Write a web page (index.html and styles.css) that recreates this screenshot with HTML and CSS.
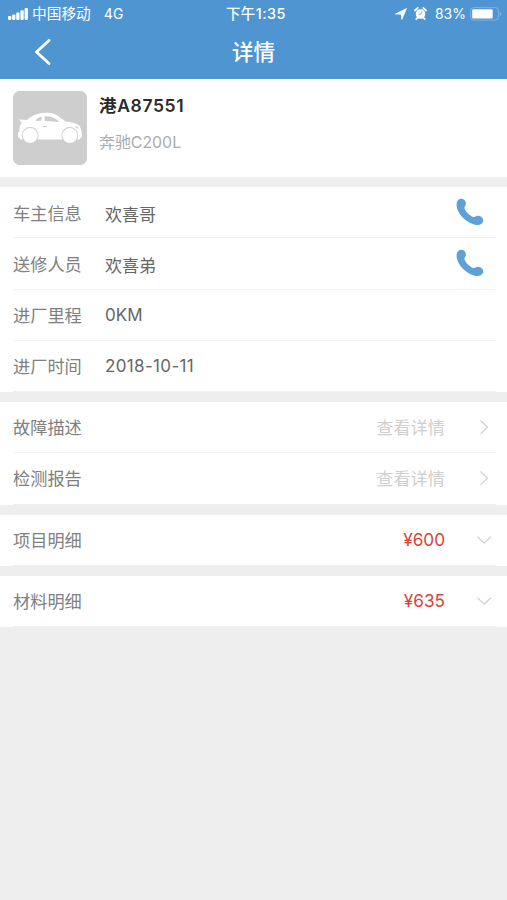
FILE: index.html
```html
<!DOCTYPE html>
<html lang="zh-CN">
<head>
<meta charset="utf-8">
<title>详情</title>
<link rel="stylesheet" href="styles.css">
</head>
<body>
<header class="header">
  <div class="status">
    <div class="status-left">
      <svg width="20" height="12" viewBox="0 0 20 12" fill="#fff"><rect x="0" y="8" width="3.3" height="4" rx="1"/><rect x="4.1" y="6.5" width="3.3" height="5.5" rx="1"/><rect x="8.2" y="4.5" width="3.3" height="7.5" rx="1"/><rect x="12.4" y="2.3" width="3.3" height="9.7" rx="1"/><rect x="16.6" y="0" width="3.3" height="12" rx="1"/></svg>
      <span class="carrier">中国移动</span><span class="network">4G</span>
    </div>
    <span class="clock">下午1:35</span>
    <div class="status-right">
      <svg class="locate" width="12" height="12" viewBox="0 0 12 12" fill="#fff" stroke="#fff" stroke-width=".8" stroke-linejoin="round"><path d="M11.5.5 6.8 11.4 6.4 6.2.5 6z"/></svg>
      <svg class="alarm" width="13" height="13" viewBox="0 0 13 13"><circle cx="6.5" cy="7" r="4.8" fill="#fff"/><path d="M.9 3.5 3.8 1M12.1 3.5 9.2 1M3.4 10.8 2.2 12.1M9.6 10.8l1.2 1.3" stroke="#fff" stroke-width="1.7" stroke-linecap="round"/><path d="M8.2 4.5 6.6 7.3H4.6" fill="none" stroke="#4e95d1" stroke-width=".8"/></svg>
      <span class="percent">83%</span>
      <svg class="battery" width="32" height="14" viewBox="0 0 32 14"><rect x=".6" y=".6" width="27.8" height="12.5" rx="3" fill="none" stroke="#86b7e0" stroke-width=".9"/><rect x="2.2" y="2.2" width="20.5" height="9.3" rx="1.2" fill="#fff"/><path d="M30 4.5q1.7 2.4 0 4.8z" fill="#a9cdea"/></svg>
    </div>
  </div>
  <nav class="nav">
    <svg class="back" width="18" height="28" viewBox="0 0 18 28"><path d="M15 2.5 2.5 14 15 25.5" fill="none" stroke="#fff" stroke-width="2.9" stroke-linecap="round" stroke-linejoin="round"/></svg>
    <h1 class="title">详情</h1>
  </nav>
</header>
<main>
  <section class="vehicle">
    <svg class="photo" width="74" height="74" viewBox="0 0 74 74"><rect width="74" height="74" rx="6.5" fill="#cecece"/><path d="M6 28.5 13.7 29C18 25.5 22 23.2 27 22.3 33 21.4 38 21.6 42 23.3 46 25.2 49 28 52.5 30.5 58 31 63 31.9 65.8 34.2 68 36.5 68.8 40 69 45.5L66.5 48.5H7.5L5 45.5V42L6.3 40.5 6.8 34.5 8.8 32z" fill="#fff"/><path d="M22.5 30C24 27.8 26 26.2 28.8 25.6L28.4 29.7zM31.4 25.3C37.5 24.8 42.5 26.8 46.5 31L31.9 30z" fill="#cecece"/><path d="M30 35.5h4" stroke="#cecece" stroke-width="1.2"/><path d="M61.5 35q3.2 0 5 2.6l-3.5-.8z" fill="#cecece"/><circle cx="17.2" cy="44.5" r="8.4" fill="#cecece"/><circle cx="56.8" cy="44.5" r="8.4" fill="#cecece"/><circle cx="17.2" cy="44.5" r="7.5" fill="#fff"/><circle cx="56.8" cy="44.5" r="7.5" fill="#fff"/></svg>
    <div class="vehicle-text">
      <div class="plate">港A87551</div>
      <div class="model">奔驰C200L</div>
    </div>
  </section>
  <section class="card owner">
    <div class="row"><span class="label contact">车主信息</span><span class="value person">欢喜哥</span><svg class="phone" width="28" height="28" viewBox="0 0 28 28"><path d="M4.8.7C7.8.2 9.9 2.5 9.9 5.5 9.9 7.8 8.2 8.4 8.4 10 8.9 13 14 18 17.2 19 18.7 19.3 19.8 17.8 21.8 17.7 24.8 17.7 27.4 20 27.3 22.7 26.9 25.7 23.2 27.4 20 26.9 10.2 25.2.3 15.3.6 6.1.7 3 2.2 1.1 4.8.7Z"/></svg></div>
    <div class="row"><span class="label contact">送修人员</span><span class="value person">欢喜弟</span><svg class="phone" width="28" height="28" viewBox="0 0 28 28"><path d="M4.8.7C7.8.2 9.9 2.5 9.9 5.5 9.9 7.8 8.2 8.4 8.4 10 8.9 13 14 18 17.2 19 18.7 19.3 19.8 17.8 21.8 17.7 24.8 17.7 27.4 20 27.3 22.7 26.9 25.7 23.2 27.4 20 26.9 10.2 25.2.3 15.3.6 6.1.7 3 2.2 1.1 4.8.7Z"/></svg></div>
    <div class="row"><span class="label">进厂里程</span><span class="value">0KM</span></div>
    <div class="row"><span class="label">进厂时间</span><span class="value date">2018-10-11</span></div>
  </section>
  <section class="card reports">
    <div class="row"><span class="label">故障描述</span><span class="more">查看详情</span><svg class="arrow" width="16" height="16" viewBox="0 0 16 16"><path d="m4.5 1.5 7 6.7-7 6.7"/></svg></div>
    <div class="row"><span class="label">检测报告</span><span class="more">查看详情</span><svg class="arrow" width="16" height="16" viewBox="0 0 16 16"><path d="m4.5 1.5 7 6.7-7 6.7"/></svg></div>
  </section>
  <section class="card single">
    <div class="row"><span class="label">项目明细</span><span class="price">¥600</span><svg class="arrow" width="16" height="16" viewBox="0 0 16 16"><path d="m1.5 4.7 6.7 6.5 6.7-6.5"/></svg></div>
  </section>
  <section class="card single">
    <div class="row"><span class="label">材料明细</span><span class="price">¥635</span><svg class="arrow" width="16" height="16" viewBox="0 0 16 16"><path d="m1.5 4.7 6.7 6.5 6.7-6.5"/></svg></div>
  </section>
</main>
</body>
</html>
```
FILE: styles.css
```css
* { box-sizing: border-box; }
body {
  margin: 0;
  min-height: 900px;
  background: #eee;
  font-family: Inter, "Noto Sans CJK SC", sans-serif;
  font-size: 17.2px;
  color: #666;
}
svg { display: block; flex: none; }
.header { height: 79px; background: #4e95d1; color: #fff; }
.status {
  display: grid;
  grid-template-columns: 1fr auto 1fr;
  align-items: center;
  height: 27px;
  padding: 0 5px 0 8px;
  font-size: 14px;
  line-height: 27px;
}
.status-left, .status-right { display: flex; align-items: center; }
.status-right { justify-content: flex-end; }
.carrier { margin-left: 4px; padding-top: 1px; font-size: 14.7px; line-height: 26px; }
.network { margin-left: 13px; letter-spacing: .3px; }
.clock { padding-left: 2px; font-size: 14.4px; font-weight: 500; letter-spacing: .5px; }
.alarm { margin-left: 7px; }
.percent { margin: 0 4px 0 8px; }
.nav {
  display: grid;
  grid-template-columns: 1fr auto 1fr;
  align-items: center;
  height: 50px;
  padding: 0 34px;
}
.title { margin: 0; font-size: 21.5px; font-weight: 500; line-height: 30px; }
.vehicle {
  display: flex;
  gap: 12px;
  height: 98px;
  padding: 12px 13px;
  background: #fff;
}
.plate { margin-top: 2px; font-size: 17.5px; line-height: 25px; font-weight: 600; letter-spacing: .65px; color: #2b2b2b; }
.model { margin-top: 13px; font-size: 15.9px; line-height: 24px; color: #ababab; }
.card { display: grid; grid-auto-rows: 1fr; margin-top: 10px; padding: 0 11px 0 13px; background: #fff; }
.owner { height: 205px; }
.reports { height: 102.5px; }
.single { height: 51px; }
.row { display: flex; align-items: center; border-bottom: 1px solid #f1f1f1; line-height: 26px; }
.row:last-child { border-bottom-color: #f0f0f0; }
.label { width: 92px; padding-top: 2px; color: #808080; }
.contact { padding-top: 3px; }
.value { color: #666; font-size: 17px; }
.person { padding-top: 5px; }
.date { letter-spacing: .35px; }
.phone { margin-left: auto; margin-right: 12px; fill: #5da1d6; }
.more, .price { margin-left: auto; margin-right: 31px; }
.more { padding-top: 1px; color: #cfcfcf; }
.price { color: #db4237; }
.arrow { margin-right: 4px; fill: none; stroke: #d0d0d0; stroke-width: 1.2; }
```
